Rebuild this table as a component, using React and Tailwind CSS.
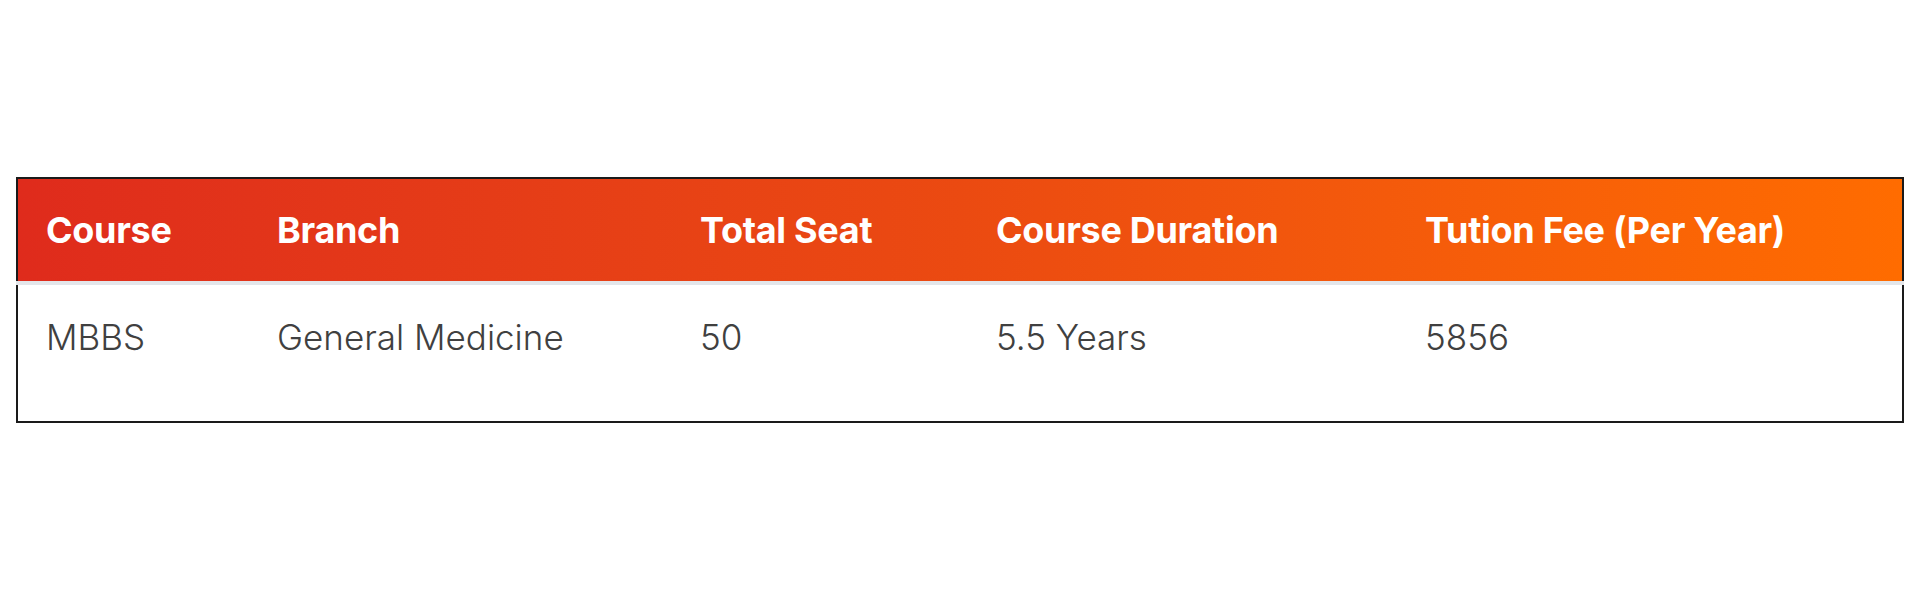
import React from 'react';

const columns = [
    { label: 'Course', width: 'w-[232px]' },
    { label: 'Branch', width: 'w-[423px]' },
    { label: 'Total Seat', width: 'w-[296px]' },
    { label: 'Course Duration', width: 'w-[429px]' },
    { label: 'Tution Fee (Per Year)', width: '' },
];

const rows = [
    ['MBBS', 'General Medicine', '50', '5.5 Years', '5856'],
];

const App = () => {
    return (
        <div className="min-h-[600px] bg-white px-4 pt-[177px]" style={{ fontFamily: 'Inter, "Noto Sans", sans-serif' }}>
            <table className="w-full border-collapse border-2 border-[#1a1a1a] table-fixed">
                <thead>
                    <tr className="bg-gradient-to-r from-[#df2b1c] via-[#eb4a11] to-[#ff6c00] border-b-4 border-[#e3e6ea]">
                        {columns.map((col) => (
                            <th
                                key={col.label}
                                className={`${col.width} h-[105px] pl-7 text-left text-[36px] font-bold tracking-[-0.3px] text-white`}
                            >
                                {col.label}
                            </th>
                        ))}
                    </tr>
                </thead>
                <tbody>
                    {rows.map((row, i) => (
                        <tr key={i}>
                            {row.map((cell, j) => (
                                <td key={j} className="h-[139px] pl-7 pb-8 text-left text-[35px] font-light text-[#404040] align-middle">
                                    {cell}
                                </td>
                            ))}
                        </tr>
                    ))}
                </tbody>
            </table>
        </div>
    );
};

export default App;
